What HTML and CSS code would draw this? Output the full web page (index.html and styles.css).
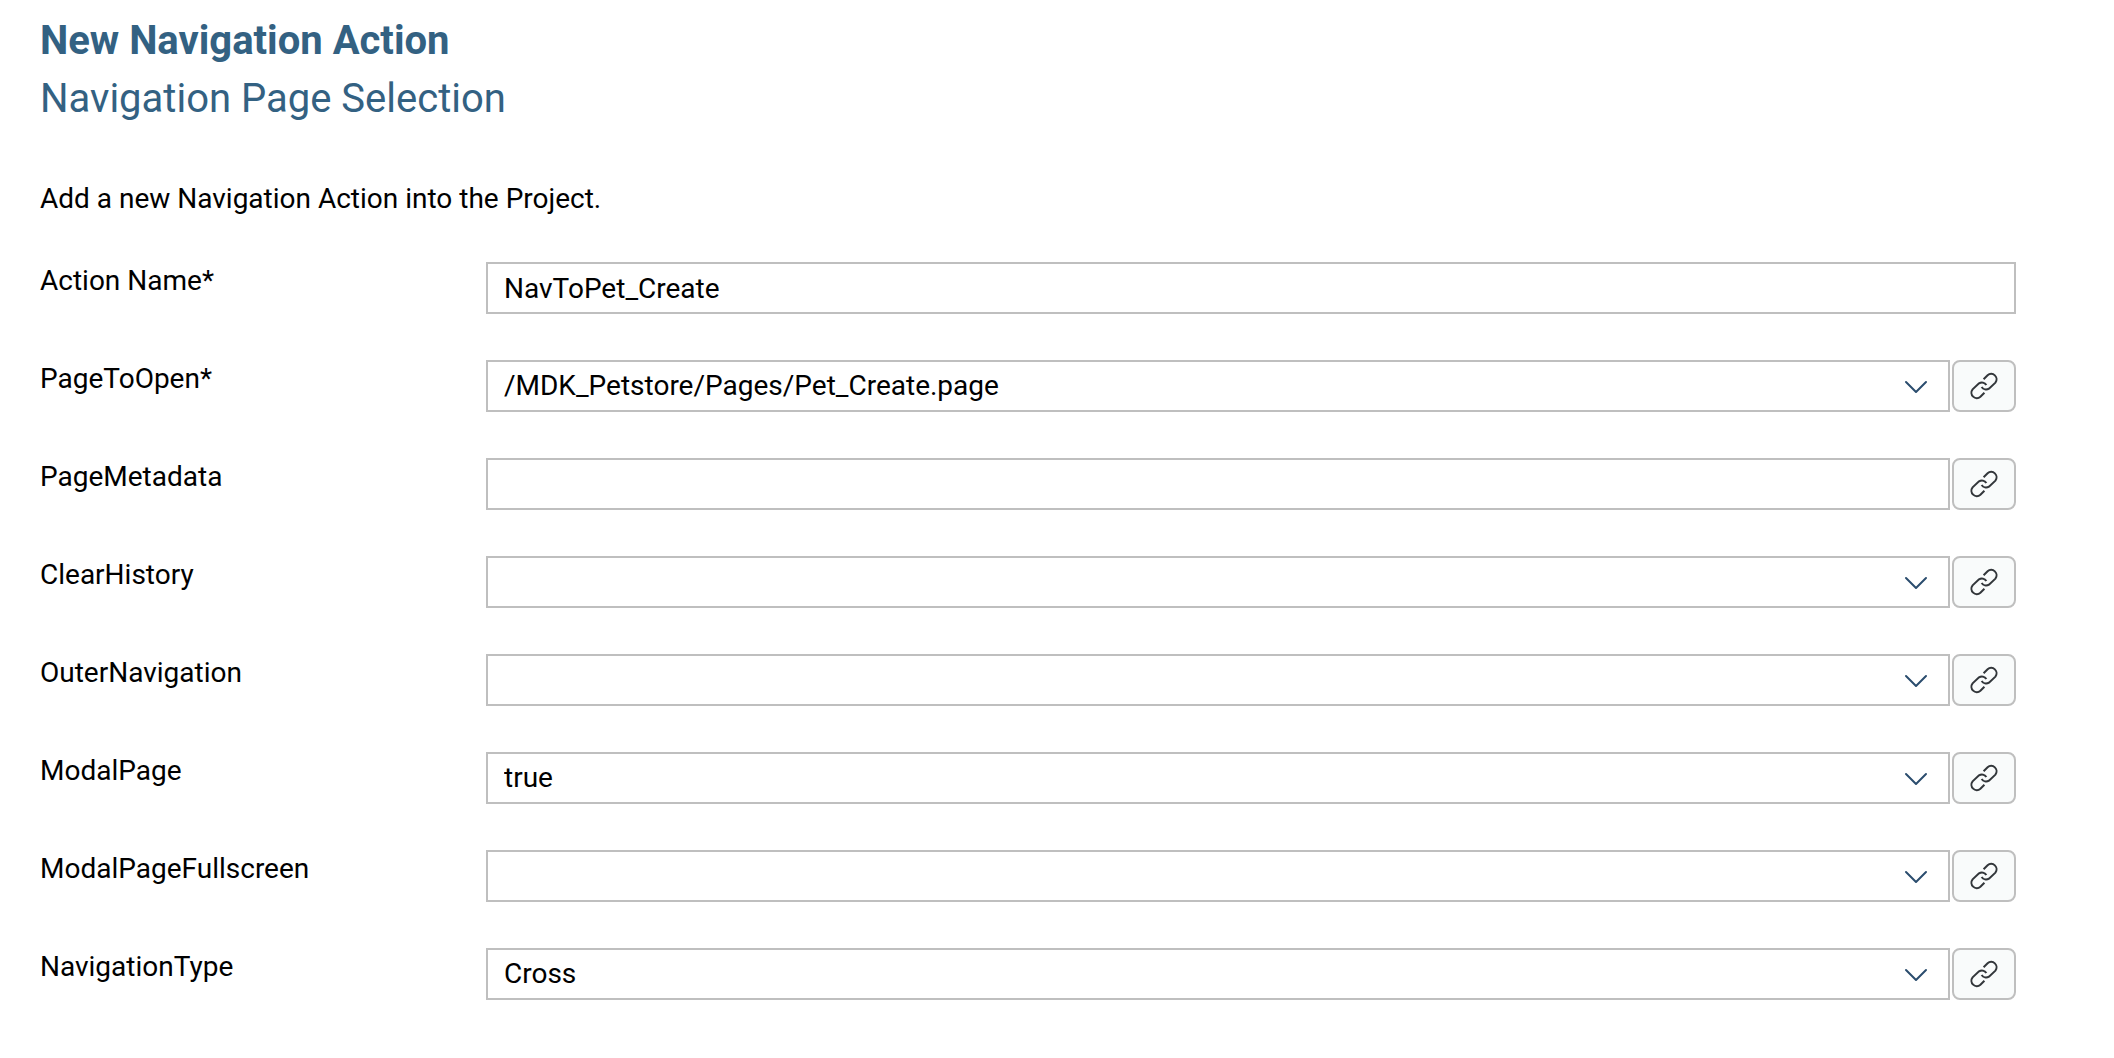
FILE: index.html
```html
<!DOCTYPE html>
<html lang="en">
<head>
<meta charset="utf-8">
<meta name="viewport" content="width=device-width, initial-scale=1">
<title>New Navigation Action</title>
<link rel="stylesheet" href="styles.css">
</head>
<body>
<svg class="sprite" aria-hidden="true">
  <symbol id="chevron" viewBox="0 0 24 14"><path d="M2 2 12 12 22 2"/></symbol>
  <symbol id="link" viewBox="0 0 28 28"><path d="M13.600 7.200 17.600 3.200a5.400 5.400 0 0 1 7.800 7.400L19 16.700a5.600 5.600 0 0 1-7.400-1.700M14.400 20.800 10.400 24.800a5.400 5.400 0 0 1-7.800-7.400L9 11.300a5.600 5.600 0 0 1 7.400 1.700"/></symbol>
</svg>
<main class="wizard">
  <header>
    <h1 class="title">New Navigation Action</h1>
    <h2 class="subtitle">Navigation Page Selection</h2>
  </header>
  <p class="intro">Add a new Navigation Action into the Project.</p>
  <form class="fields">
    <div class="row">
      <label class="label" for="action-name">Action Name*</label>
      <input class="control" id="action-name" type="text" value="NavToPet_Create">
    </div>
    <div class="row">
      <label class="label" for="page-to-open">PageToOpen*</label>
      <div class="group">
        <div class="picker"><select class="control" id="page-to-open"><option>/MDK_Petstore/Pages/Pet_Create.page</option></select><svg class="chevron" aria-hidden="true"><use href="#chevron"/></svg></div>
        <button class="bind" type="button" aria-label="Bind PageToOpen"><svg class="link" aria-hidden="true"><use href="#link"/></svg></button>
      </div>
    </div>
    <div class="row">
      <label class="label" for="page-metadata">PageMetadata</label>
      <div class="group">
        <input class="control" id="page-metadata" type="text">
        <button class="bind" type="button" aria-label="Bind PageMetadata"><svg class="link" aria-hidden="true"><use href="#link"/></svg></button>
      </div>
    </div>
    <div class="row">
      <label class="label" for="clear-history">ClearHistory</label>
      <div class="group">
        <div class="picker"><select class="control" id="clear-history"><option></option><option>true</option><option>false</option></select><svg class="chevron" aria-hidden="true"><use href="#chevron"/></svg></div>
        <button class="bind" type="button" aria-label="Bind ClearHistory"><svg class="link" aria-hidden="true"><use href="#link"/></svg></button>
      </div>
    </div>
    <div class="row">
      <label class="label" for="outer-navigation">OuterNavigation</label>
      <div class="group">
        <div class="picker"><select class="control" id="outer-navigation"><option></option><option>true</option><option>false</option></select><svg class="chevron" aria-hidden="true"><use href="#chevron"/></svg></div>
        <button class="bind" type="button" aria-label="Bind OuterNavigation"><svg class="link" aria-hidden="true"><use href="#link"/></svg></button>
      </div>
    </div>
    <div class="row">
      <label class="label" for="modal-page">ModalPage</label>
      <div class="group">
        <div class="picker"><select class="control" id="modal-page"><option>true</option><option>false</option></select><svg class="chevron" aria-hidden="true"><use href="#chevron"/></svg></div>
        <button class="bind" type="button" aria-label="Bind ModalPage"><svg class="link" aria-hidden="true"><use href="#link"/></svg></button>
      </div>
    </div>
    <div class="row">
      <label class="label" for="modal-fullscreen">ModalPageFullscreen</label>
      <div class="group">
        <div class="picker"><select class="control" id="modal-fullscreen"><option></option><option>true</option><option>false</option></select><svg class="chevron" aria-hidden="true"><use href="#chevron"/></svg></div>
        <button class="bind" type="button" aria-label="Bind ModalPageFullscreen"><svg class="link" aria-hidden="true"><use href="#link"/></svg></button>
      </div>
    </div>
    <div class="row">
      <label class="label" for="navigation-type">NavigationType</label>
      <div class="group">
        <div class="picker"><select class="control" id="navigation-type"><option>Cross</option></select><svg class="chevron" aria-hidden="true"><use href="#chevron"/></svg></div>
        <button class="bind" type="button" aria-label="Bind NavigationType"><svg class="link" aria-hidden="true"><use href="#link"/></svg></button>
      </div>
    </div>
  </form>
</main>
</body>
</html>
```
FILE: styles.css
```css
*, *::before, *::after {
  box-sizing: border-box;
}

body {
  margin: 0;
  background: #fff;
  color: #000;
  font: 28px/32px Roboto, "Liberation Sans", sans-serif;
}

.sprite {
  display: none;
}

.wizard {
  padding: 12px 98px 48px 40px;
}

.title,
.subtitle {
  margin: 0;
  color: #336182;
  font-size: 40px;
  line-height: 58px;
}

.title {
  font-weight: 700;
}

.subtitle {
  font-weight: 400;
}

.intro {
  margin: 55px 0 47px;
}

.fields {
  display: grid;
  gap: 46px;
}

.row {
  display: grid;
  grid-template-columns: 446px minmax(0, 1fr);
  align-items: start;
}

.label {
  padding-top: 3px;
}

.group {
  display: grid;
  grid-template-columns: minmax(0, 1fr) 64px;
  gap: 2px;
}

.control {
  width: 100%;
  height: 52px;
  margin: 0;
  padding: 0 16px;
  border: 2px solid #bfbfbf;
  border-radius: 0;
  background: #fff;
  color: #000;
  font: inherit;
  appearance: none;
}

.picker {
  display: grid;
  align-items: center;
}

.picker > * {
  grid-area: 1 / 1;
}

.chevron {
  justify-self: end;
  width: 24px;
  height: 14px;
  margin: 2px 22px 0 0;
  fill: none;
  stroke: #2b4d6e;
  stroke-width: 2;
  stroke-linecap: round;
  stroke-linejoin: round;
  pointer-events: none;
}

.bind {
  display: grid;
  place-items: center;
  height: 52px;
  padding: 0;
  border: 2px solid #bfbfbf;
  border-radius: 8px;
  background: #f9fbfb;
}

.link {
  width: 28px;
  height: 28px;
  fill: none;
  stroke: #32363a;
  stroke-width: 2;
  stroke-linecap: butt;
}
```
